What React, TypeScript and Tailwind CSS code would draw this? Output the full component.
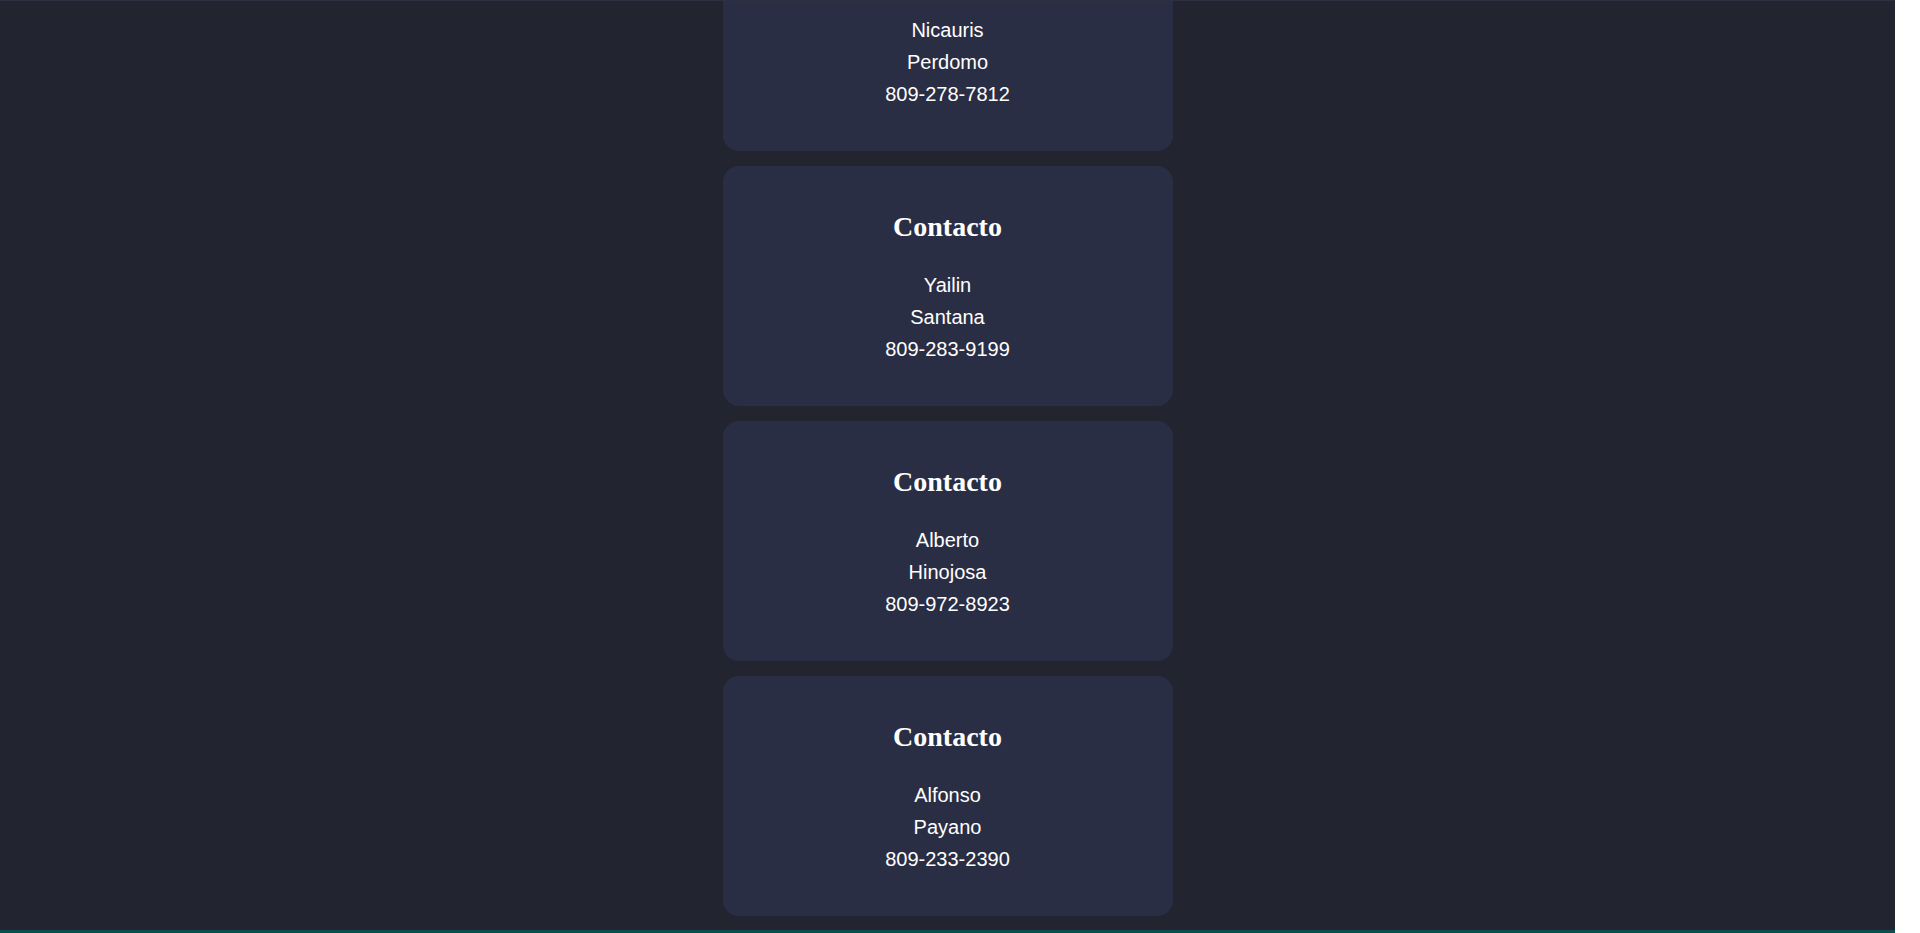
const contactos = [
  { nombre: 'Nicauris', apellido: 'Perdomo', telefono: '809-278-7812' },
  { nombre: 'Yailin', apellido: 'Santana', telefono: '809-283-9199' },
  { nombre: 'Alberto', apellido: 'Hinojosa', telefono: '809-972-8923' },
  { nombre: 'Alfonso', apellido: 'Payano', telefono: '809-233-2390' },
]

function ContactCard({ nombre, apellido, telefono }: { nombre: string; apellido: string; telefono: string }) {
  return (
    <div className="w-[450px] h-[240px] shrink-0 rounded-2xl bg-[#2a2e44] pt-[45px] pb-[41px] text-center text-white">
      <h2 className="font-['Liberation_Serif','Times_New_Roman',serif] text-[28px] font-bold leading-[32px] mb-[26px]">
        Contacto
      </h2>
      <div className="font-['Liberation_Sans',Arial,sans-serif] text-[20px] leading-8">
        <p>{nombre}</p>
        <p>{apellido}</p>
        <p>{telefono}</p>
      </div>
    </div>
  )
}

export default function App() {
  return (
    <div className="flex h-[933px] w-full overflow-hidden bg-white">
      <main className="flex-1 flex flex-col items-center justify-end gap-[15px] overflow-hidden bg-[#22252f] border-t border-t-[#2d3040] border-b-[3px] border-b-[#0c4e4f] pb-[14px]">
        {contactos.map((c) => (
          <ContactCard key={c.telefono} {...c} />
        ))}
      </main>
      <div className="w-[25px] shrink-0 bg-white" />
    </div>
  )
}
